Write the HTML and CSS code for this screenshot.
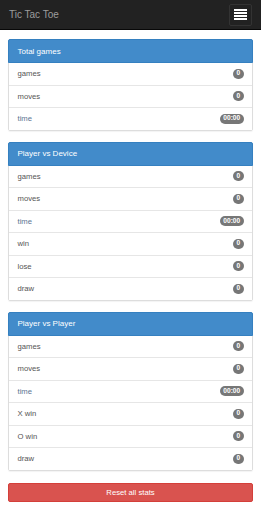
FILE: index.html
```html
<!DOCTYPE html>
<html lang="en">
<head>
    <meta charset="UTF-8">
    <meta name="viewport" content="width=device-width, initial-scale=1.0">
    <title>Tic Tac Toe</title>
    <link rel="stylesheet" href="styles.css">
</head>
<body>
    <nav class="navbar">
        <span class="brand">Tic Tac Toe</span>
        <button class="toggle" type="button">
            <span class="icon-bar"></span>
            <span class="icon-bar"></span>
            <span class="icon-bar"></span>
            <span class="icon-bar"></span>
        </button>
    </nav>

    <div class="container">
        <!-- Total games -->
        <div class="panel">
            <div class="panel-heading">Total games</div>
            <ul class="list-group">
                <li class="list-item">games <span class="badge">0</span></li>
                <li class="list-item">moves <span class="badge">0</span></li>
                <li class="list-item time">time <span class="badge">00:00</span></li>
            </ul>
        </div>

        <!-- Player vs Device -->
        <div class="panel">
            <div class="panel-heading">Player vs Device</div>
            <ul class="list-group">
                <li class="list-item">games <span class="badge">0</span></li>
                <li class="list-item">moves <span class="badge">0</span></li>
                <li class="list-item time">time <span class="badge">00:00</span></li>
                <li class="list-item">win <span class="badge">0</span></li>
                <li class="list-item">lose <span class="badge">0</span></li>
                <li class="list-item">draw <span class="badge">0</span></li>
            </ul>
        </div>

        <!-- Player vs Player -->
        <div class="panel">
            <div class="panel-heading">Player vs Player</div>
            <ul class="list-group">
                <li class="list-item">games <span class="badge">0</span></li>
                <li class="list-item">moves <span class="badge">0</span></li>
                <li class="list-item time">time <span class="badge">00:00</span></li>
                <li class="list-item">X win <span class="badge">0</span></li>
                <li class="list-item">O win <span class="badge">0</span></li>
                <li class="list-item">draw <span class="badge">0</span></li>
            </ul>
        </div>

        <button class="btn-reset" type="button">Reset all stats</button>
    </div>
</body>
</html>
```

FILE: styles.css
```css
body {
    font-family: "Liberation Sans", Arial, sans-serif;
    background-color: #fff;
    color: #555;
    margin: 0;
}
.navbar {
    height: 29px;
    background-color: #222;
    border-bottom: 1px solid #080808;
    display: flex;
    align-items: center;
    justify-content: space-between;
    padding: 0 9px;
}
.brand {
    color: #9d9d9d;
    font-size: 10px;
    line-height: 14px;
}
.toggle {
    width: 23px;
    height: 22px;
    background: transparent;
    border: 1px solid #333;
    border-radius: 2px;
    padding: 0;
    display: flex;
    flex-direction: column;
    align-items: center;
    justify-content: center;
    gap: 1.5px;
}
.icon-bar {
    display: block;
    width: 13px;
    height: 1.5px;
    background-color: #fff;
}
.container {
    padding: 9px 8px 8px;
}
.panel {
    border: 1px solid #ddd;
    border-radius: 2px;
    margin-bottom: 11px;
    box-shadow: 0 1px 1px rgba(0, 0, 0, 0.05);
}
.panel-heading {
    margin: -1px -1px 0;
    background-color: #428bca;
    border: 1px solid #3580c0;
    border-radius: 2px 2px 0 0;
    color: #fff;
    font-size: 8px;
    line-height: 11px;
    padding: 5.5px 8.5px;
}
.list-group {
    list-style: none;
    margin: 0;
    padding: 0;
    background: #fff;
}
.list-item {
    display: flex;
    justify-content: space-between;
    align-items: center;
    font-size: 7.7px;
    line-height: 11px;
    padding: 5.25px 8px 5.25px 8.5px;
    border-top: 1px solid #e6e6e6;
}
.list-item:first-child {
    border-top: none;
}
.list-item.time {
    color: #5a7391;
}
.badge {
    background-color: #777;
    color: #fff;
    font-size: 6.6px;
    font-weight: bold;
    line-height: 6.6px;
    padding: 1.6px 3.8px;
    border-radius: 6px;
}
.btn-reset {
    display: block;
    width: 100%;
    margin-top: 12px;
    height: 19px;
    background-color: #d9534f;
    border: 1px solid #d43f3a;
    border-radius: 2px;
    color: #fff;
    font-family: "Liberation Sans", Arial, sans-serif;
    font-size: 7.7px;
    padding: 0;
}
```
